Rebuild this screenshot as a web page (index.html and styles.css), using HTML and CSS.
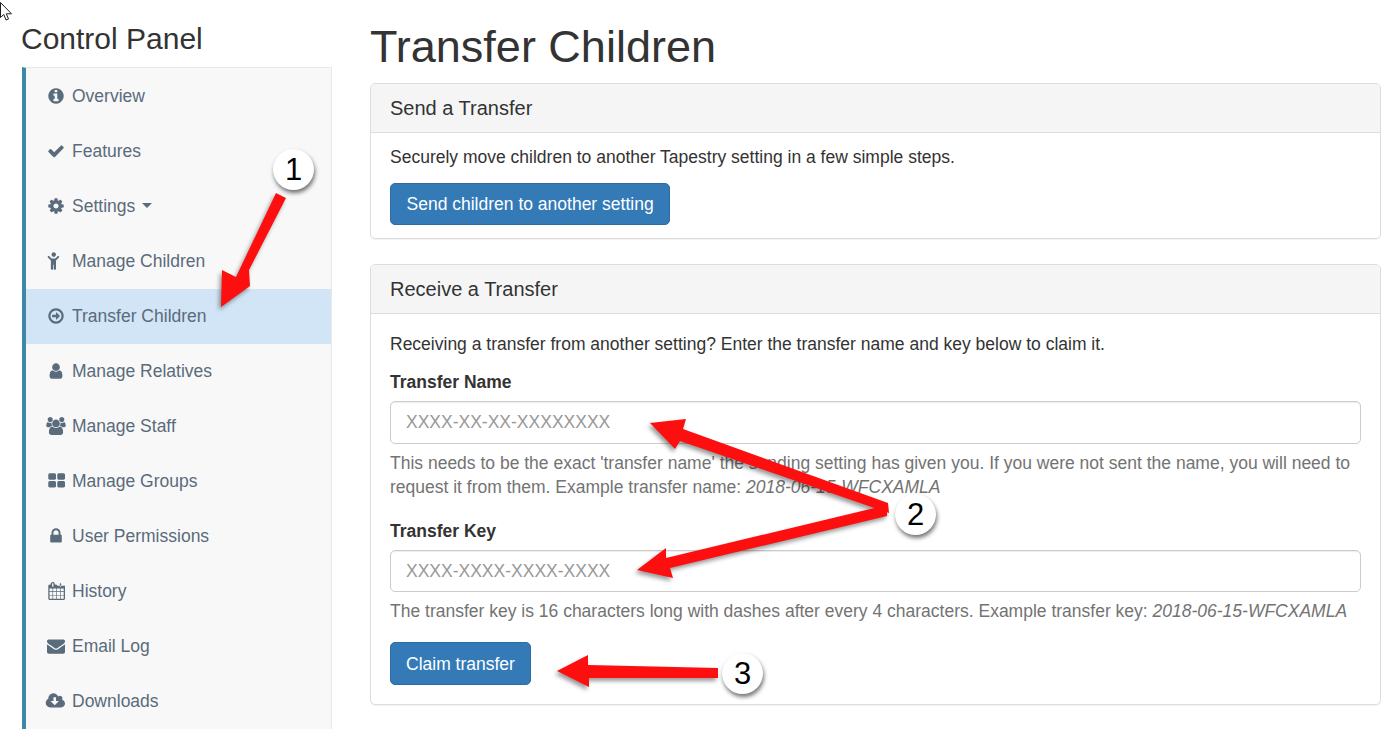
FILE: index.html
```html
<!DOCTYPE html>
<html lang="en">
<head>
    <meta charset="UTF-8">
    <title>Transfer Children</title>
    <link rel="stylesheet" href="styles.css">
</head>
<body>
    <svg class="defs" width="0" height="0">
        <symbol id="i-info" viewBox="0 0 1536 1792"><path transform="translate(-128 0)" d="M1152 1376v-160q0-14-9-23t-23-9h-96v-512q0-14-9-23t-23-9h-320q-14 0-23 9t-9 23v160q0 14 9 23t23 9h96v320h-96q-14 0-23 9t-9 23v160q0 14 9 23t23 9h448q14 0 23-9t9-23zm-128-896v-160q0-14-9-23t-23-9h-192q-14 0-23 9t-9 23v160q0 14 9 23t23 9h192q14 0 23-9t9-23zm640 416q0 209-103 385.500t-279.500 279.500-385.500 103-385.500-103-279.500-279.500-103-385.500 103-385.500 279.500-279.500 385.500-103 385.500 103 279.500 279.500 103 385.500z"/></symbol>
        <symbol id="i-check" viewBox="0 0 1792 1792"><path d="M1671 566q0 40-28 68l-724 724-136 136q-28 28-68 28t-68-28l-136-136-362-362q-28-28-28-68t28-68l136-136q28-28 68-28t68 28l294 295 656-657q28-28 68-28t68 28l136 136q28 28 28 68z"/></symbol>
        <symbol id="i-cog" viewBox="0 0 1536 1792"><path transform="translate(-128 0)" d="M1152 896q0-106-75-181t-181-75-181 75-75 181 75 181 181 75 181-75 75-181zm512-109v222q0 12-8 23t-20 13l-185 28q-19 54-39 91 35 50 107 138 10 12 10 25t-9 23q-27 37-99 108t-94 71q-12 0-26-9l-138-108q-44 23-91 38-16 136-29 186-7 28-36 28h-222q-14 0-24.500-8.500t-11.500-21.500l-28-184q-49-16-90-37l-141 107q-10 9-25 9-14 0-25-11-126-114-165-168-7-10-7-23 0-12 8-23 15-21 51-66.500t54-70.500q-27-50-41-99l-183-27q-13-2-21-12.500t-8-23.500v-222q0-12 8-23t19-13l186-28q14-46 39-92-40-57-107-138-10-12-10-24 0-10 9-23 26-36 98.500-107.500t94.500-71.500q13 0 26 10l138 107q44-23 91-38 16-136 29-186 7-28 36-28h222q14 0 24.500 8.500t11.500 21.500l28 184q49 16 90 37l142-107q9-9 24-9 13 0 25 10 129 119 165 170 7 8 7 22 0 12-8 23-15 21-51 66.500t-54 70.500q26 50 41 98l183 28q13 2 21 12.500t8 23.500z"/></symbol>
        <symbol id="i-child" viewBox="0 0 1344 1792"><path transform="translate(-224 0)" d="M1188 548l-292 292v824q0 46-33 79t-79 33-79-33-33-79v-384h-64v384q0 46-33 79t-79 33-79-33-33-79v-824l-292-292q-28-28-28-68t28-68q29-28 68.500-28t67.500 28l228 228h368l228-228q28-28 68-28t68 28q28 29 28 68.500t-28 67.500zm-292-292q0 93-65.500 158.500t-158.500 65.500-158.500-65.500-65.500-158.500 65.500-158.500 158.500-65.500 158.500 65.500 65.500 158.500z"/></symbol>
        <symbol id="i-arrow" viewBox="0 0 1536 1792"><path transform="translate(-128 0)" d="M1280 896q0 14-9 23l-320 320q-9 9-23 9-13 0-22.500-9.500t-9.500-22.500v-192h-352q-13 0-22.500-9.500t-9.500-22.500v-192q0-13 9.500-22.500t22.500-9.500h352v-192q0-14 9-23t23-9q12 0 24 10l319 319q9 9 9 23zm160 0q0-148-73-273t-198-198-273-73-273 73-198 198-73 273 73 273 198 198 273 73 273-73 198-198 73-273zm224 0q0 209-103 385.500t-279.500 279.500-385.500 103-385.500-103-279.500-279.500-103-385.500 103-385.500 279.500-279.500 385.500-103 385.500 103 279.500 279.500 103 385.500z"/></symbol>
        <symbol id="i-user" viewBox="0 0 1280 1792"><path transform="translate(-256 0)" d="M1536 1399q0 109-62.500 187t-150.500 78h-854q-88 0-150.500-78t-62.500-187q0-85 8.500-160.500t31.500-152 58.500-131 94-89 134.500-34.500q131 128 313 128t313-128q76 0 134.500 34.500t94 89 58.500 131 31.500 152 8.500 160.500zm-256-887q0 159-112.500 271.500t-271.500 112.500-271.500-112.500-112.500-271.500 112.500-271.500 271.500-112.500 271.500 112.500 112.500 271.500z"/></symbol>
        <symbol id="i-users" viewBox="0 0 1920 1792"><path d="M593 896q-162 5-265 128h-134q-82 0-138-40.500t-56-118.500q0-353 124-353 6 0 43.500 21t97.500 42.500 119 21.500q67 0 133-23-5 37-5 66 0 139 81 256zm1071 637q0 120-73 189.500t-194 69.500h-874q-121 0-194-69.500t-73-189.500q0-53 3.500-103.500t14-109 26.500-108.500 43-97.500 62-81 85.500-53.500 111.500-20q10 0 43 21.500t73 48 107 48 135 21.500 135-21.500 107-48 73-48 43-21.500q61 0 111.500 20t85.500 53.500 62 81 43 97.500 26.500 108.500 14 109 3.500 103.500zm-1024-1277q0 106-75 181t-181 75-181-75-75-181 75-181 181-75 181 75 75 181zm704 384q0 159-112.500 271.500t-271.500 112.500-271.500-112.500-112.500-271.500 112.500-271.500 271.500-112.500 271.500 112.500 112.500 271.500zm576 225q0 78-56 118.500t-138 40.500h-134q-103-123-265-128 81-117 81-256 0-29-5-66 66 23 133 23 59 0 119-21.500t97.500-42.500 43.500-21q124 0 124 353zm-128-609q0 106-75 181t-181 75-181-75-75-181 75-181 181-75 181 75 75 181z"/></symbol>
        <symbol id="i-grid" viewBox="0 0 1664 1792"><path d="M832 1024v384q0 52-38 90t-90 38h-512q-52 0-90-38t-38-90v-384q0-52 38-90t90-38h512q52 0 90 38t38 90zm0-768v384q0 52-38 90t-90 38h-512q-52 0-90-38t-38-90v-384q0-52 38-90t90-38h512q52 0 90 38t38 90zm896 768v384q0 52-38 90t-90 38h-512q-52 0-90-38t-38-90v-384q0-52 38-90t90-38h512q52 0 90 38t38 90zm0-768v384q0 52-38 90t-90 38h-512q-52 0-90-38t-38-90v-384q0-52 38-90t90-38h512q52 0 90 38t38 90z"/></symbol>
        <symbol id="i-lock" viewBox="0 0 1152 1792"><path transform="translate(-320 0)" d="M640 768h512v-192q0-106-75-181t-181-75-181 75-75 181v192zm832 96v576q0 40-28 68t-68 28h-960q-40 0-68-28t-28-68v-576q0-40 28-68t68-28h32v-192q0-184 132-316t316-132 316 132 132 316v192h32q40 0 68 28t28 68z"/></symbol>
        <symbol id="i-calendar" viewBox="0 0 1664 1792"><path d="M192 1664h288v-288h-288v288zm352 0h320v-288h-320v288zm-352-352h288v-320h-288v320zm352 0h320v-320h-320v320zm-352-384h288v-288h-288v288zm736 736h320v-288h-320v288zm-384-736h320v-288h-320v288zm768 736h288v-288h-288v288zm-384-352h320v-320h-320v320zm-352-864v-288q0-13-9.500-22.500t-22.500-9.500h-64q-13 0-22.500 9.500t-9.500 22.500v288q0 13 9.500 22.500t22.500 9.500h64q13 0 22.500-9.500t9.500-22.500zm736 864h288v-320h-288v320zm-384-384h320v-288h-320v288zm384 0h288v-288h-288v288zm32-480v-288q0-13-9.500-22.500t-22.500-9.500h-64q-13 0-22.500 9.500t-9.500 22.500v288q0 13 9.500 22.500t22.500 9.500h64q13 0 22.500-9.500t9.500-22.500zm384-64v1280q0 52-38 90t-90 38h-1408q-52 0-90-38t-38-90v-1280q0-52 38-90t90-38h128v-96q0-66 47-113t113-47h64q66 0 113 47t47 113v96h128q52 0 90 38t38 90z"/></symbol>
        <symbol id="i-mail" viewBox="0 0 1792 1792"><path d="M1792 710v794q0 66-47 113t-113 47h-1472q-66 0-113-47t-47-113v-794q44 49 101 87 362 246 497 345 57 42 92.500 65.500t94.500 48 110 24.500h2q51 0 110-24.500t94.500-48 92.500-65.500q170-123 498-345 57-39 100-87zm0-294q0 79-49 151t-122 123q-376 261-468 325-10 7-42.500 30.500t-54 38-52 32.500-57.500 27-50 9h-2q-23 0-50-9t-57.500-27-52-32.500-54-38-42.500-30.500q-91-64-262-182.500t-205-142.500q-62-42-117-115.500t-55-136.500q0-78 41.500-130t118.500-52h1472q65 0 112.500 47t47.500 113z"/></symbol>
        <symbol id="i-cloud" viewBox="0 0 1920 1792"><path d="M1216 928q0-14-9-23t-23-9h-224v-352q0-13-9.500-22.500t-22.500-9.500h-192q-13 0-22.500 9.500t-9.500 22.500v352h-224q-13 0-22.500 9.500t-9.500 22.500q0 14 9 23l352 352q9 9 23 9t23-9l351-351q10-12 10-24zm640 224q0 159-112.500 271.500t-271.500 112.500h-1088q-185 0-316.500-131.500t-131.500-316.500q0-130 70-240t188-165q-2-30-2-43 0-212 150-362t362-150q156 0 285.500 87t188.500 231q71-62 166-62 106 0 181 75t75 181q0 76-41 138 130 31 213.500 135.500t83.500 238.500z"/></symbol>
    </svg>

    <div class="page">
        <aside class="sidebar">
            <h2>Control Panel</h2>
            <ul class="side-nav">
                <li><svg class="ico"><use href="#i-info"/></svg>Overview</li>
                <li><svg class="ico"><use href="#i-check"/></svg>Features</li>
                <li><svg class="ico"><use href="#i-cog"/></svg>Settings<span class="caret"></span></li>
                <li><svg class="ico"><use href="#i-child"/></svg>Manage Children</li>
                <li class="active"><svg class="ico"><use href="#i-arrow"/></svg>Transfer Children</li>
                <li><svg class="ico"><use href="#i-user"/></svg>Manage Relatives</li>
                <li><svg class="ico"><use href="#i-users"/></svg>Manage Staff</li>
                <li><svg class="ico"><use href="#i-grid"/></svg>Manage Groups</li>
                <li><svg class="ico"><use href="#i-lock"/></svg>User Permissions</li>
                <li><svg class="ico"><use href="#i-calendar"/></svg>History</li>
                <li><svg class="ico"><use href="#i-mail"/></svg>Email Log</li>
                <li><svg class="ico"><use href="#i-cloud"/></svg>Downloads</li>
            </ul>
        </aside>

        <main class="content">
            <h1>Transfer Children</h1>

            <section class="panel">
                <div class="panel-heading">Send a Transfer</div>
                <div class="panel-body">
                    <p>Securely move children to another Tapestry setting in a few simple steps.</p>
                    <button type="button" class="btn">Send children to another setting</button>
                </div>
            </section>

            <section class="panel">
                <div class="panel-heading">Receive a Transfer</div>
                <div class="panel-body panel-body-form">
                    <p>Receiving a transfer from another setting? Enter the transfer name and key below to claim it.</p>
                    <div class="form-group">
                        <label for="transferName">Transfer Name</label>
                        <input type="text" id="transferName" placeholder="XXXX-XX-XX-XXXXXXXX">
                        <p class="help">This needs to be the exact 'transfer name' the sending setting has given you. If you were not sent the name, you will need to request it from them. Example transfer name: <em>2018-06-15-WFCXAMLA</em></p>
                    </div>
                    <div class="form-group">
                        <label for="transferKey">Transfer Key</label>
                        <input type="text" id="transferKey" placeholder="XXXX-XXXX-XXXX-XXXX">
                        <p class="help">The transfer key is 16 characters long with dashes after every 4 characters. Example transfer key: <em>2018-06-15-WFCXAMLA</em></p>
                    </div>
                    <button type="button" class="btn">Claim transfer</button>
                </div>
            </section>
        </main>
    </div>

    <!-- annotations drawn over the screenshot -->
    <svg class="cursor" width="14" height="22" viewBox="0 0 14 22">
        <path d="M0.500 2.500V17.500L3.800 14.500L6 20L8.500 19L6.300 13.800H11.500Z" fill="#fff" stroke="#222" stroke-width="1"/>
    </svg>
    <svg class="arrows" width="1393" height="729" viewBox="0 0 1393 729">
        <polygon points="276,193 286,198 249,270 250,286 221,307 222,270 236,277"/>
        <polygon points="888,503 889,513 680,441 675,449 650,423 686,419 683,429"/>
        <polygon points="887,505 887,516 670,568 673,578 637,570 666,548 666,558"/>
        <polygon points="718,668 718,678 589,678 589,687 557,671 588,655 588,665"/>
    </svg>
    <div class="badge badge-1">1</div>
    <div class="badge badge-2">2</div>
    <div class="badge badge-3">3</div>
</body>
</html>
```

FILE: styles.css
```css
:root {
    --text: #333333;
    --nav-text: #5a6b7b;
    --muted: #737373;
    --border: #dddddd;
    --blue: #337ab7;
    --teal: #3f87a6;
}

html, body {
    margin: 0;
    height: 100%;
    overflow: hidden;
}

body {
    font-family: "Liberation Sans", Arial, sans-serif;
    font-size: 17.5px;
    line-height: 24px;
    color: var(--text);
    background: #fff;
}

.defs {
    position: absolute;
}

.page {
    display: flex;
    align-items: flex-start;
    gap: 38px;
    padding-left: 21px;
    height: 729px;
    overflow: hidden;
}

/* sidebar */
.sidebar {
    width: 311px;
    flex: none;
}

.sidebar h2 {
    margin: 0;
    padding-top: 22px;
    height: 45px;
    font-size: 30px;
    line-height: 34px;
    font-weight: 400;
}

.side-nav {
    list-style: none;
    margin: 0 0 0 1px;
    padding: 1px 0 0;
    background: #f8f8f8;
    border-top: 1px solid #e7e7e7;
    border-right: 1px solid #e7e7e7;
    border-left: 4px solid var(--teal);
}

.side-nav li {
    display: flex;
    align-items: center;
    box-sizing: border-box;
    height: 55px;
    padding: 0 0 2px 19px;
    color: var(--nav-text);
}

.side-nav li.active {
    background: #d1e5f6;
}

.ico {
    width: 22px;
    height: 18px;
    margin-right: 5px;
    fill: currentColor;
    flex: none;
}

.caret {
    margin-left: 7px;
    border-top: 5px solid currentColor;
    border-left: 5px solid transparent;
    border-right: 5px solid transparent;
}

/* main column */
.content {
    width: 1011px;
    flex: none;
}

.content h1 {
    margin: 0;
    padding-top: 22px;
    height: 61px;
    font-size: 45px;
    line-height: 50px;
    font-weight: 400;
}

.panel {
    margin-bottom: 25px;
    border: 1px solid var(--border);
    border-radius: 5px;
    box-shadow: 0 1px 1px rgba(0, 0, 0, 0.05);
}

.panel-heading {
    height: 48px;
    padding: 0 19px;
    font-size: 20px;
    line-height: 48px;
    background: #f5f5f5;
    border-bottom: 1px solid var(--border);
    border-radius: 4px 4px 0 0;
}

.panel-body {
    padding: 12px 19px 13px;
}

.panel-body-form {
    padding-top: 18px;
    padding-bottom: 19px;
}

.panel-body p {
    margin: 0 0 14px;
}

.form-group {
    margin-bottom: 20px;
}

.form-group + .form-group {
    margin-bottom: 19px;
}

label {
    display: block;
    margin-bottom: 7px;
    font-weight: 700;
}

input[type="text"] {
    display: block;
    box-sizing: border-box;
    width: 100%;
    height: 43px;
    padding: 0 15px;
    font: inherit;
    color: var(--text);
    border: 1px solid #cccccc;
    border-radius: 5px;
    box-shadow: inset 0 1px 1px rgba(0, 0, 0, 0.075);
}

.form-group + .form-group input[type="text"] {
    height: 42px;
}

input::placeholder {
    color: #999999;
    opacity: 1;
}

.panel-body .help {
    margin: 7px 0 0;
    color: var(--muted);
}

.btn {
    display: block;
    height: 42px;
    padding: 0 15.5px;
    font: inherit;
    color: #fff;
    background: var(--blue);
    border: 1px solid #2e6da4;
    border-radius: 5px;
}

.panel-body-form .btn {
    height: 43px;
    padding: 0 15px;
}

/* annotations */
.cursor {
    position: absolute;
    left: 0;
    top: 0;
}

.arrows {
    position: absolute;
    left: 0;
    top: 0;
    fill: #fd0f0f;
    filter: drop-shadow(-2px 3px 2px rgba(0, 0, 0, 0.4));
}

.badge {
    position: absolute;
    width: 41px;
    height: 41px;
    font-size: 31px;
    line-height: 41px;
    text-align: center;
    color: #000;
    background: #fff;
    border-radius: 50%;
    box-shadow: 1px 3px 4px rgba(0, 0, 0, 0.55);
}

.badge-1 { left: 273px; top: 149px; }
.badge-2 { left: 895px; top: 494px; }
.badge-3 { left: 722px; top: 653px; }
```
